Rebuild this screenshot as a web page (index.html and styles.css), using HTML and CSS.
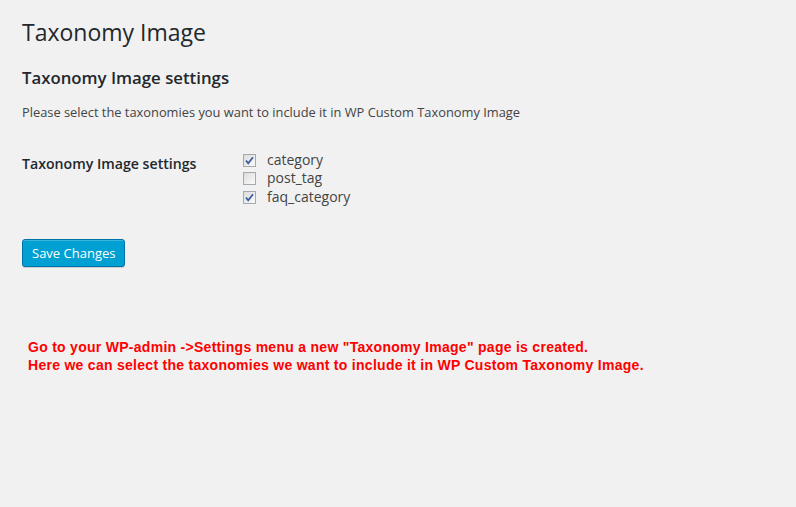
FILE: index.html
```html
<!DOCTYPE html>
<html>
<head>
<meta charset="utf-8">
<link rel="stylesheet" href="styles.css">
</head>
<body>
<div class="wrap">
  <h1 class="title">Taxonomy Image</h1>
  <h3 class="subtitle">Taxonomy Image settings</h3>
  <p class="desc">Please select the taxonomies you want to include it in WP Custom Taxonomy Image</p>
  <div class="form-row">
    <div class="label">Taxonomy Image settings</div>
    <div class="options">
      <label class="opt"><span class="cb"><svg viewBox="0 0 11 11" width="11" height="11"><path d="M2 5.5 L4.2 8.2 L9 2.2" fill="none" stroke="#3b5c9e" stroke-width="1.8"/></svg></span>category</label>
      <label class="opt"><span class="cb"></span>post_tag</label>
      <label class="opt"><span class="cb"><svg viewBox="0 0 11 11" width="11" height="11"><path d="M2 5.5 L4.2 8.2 L9 2.2" fill="none" stroke="#3b5c9e" stroke-width="1.8"/></svg></span>faq_category</label>
    </div>
  </div>
  <button class="btn">Save Changes</button>
  <div class="note">
    <div>Go to your WP-admin -&gt;Settings menu a new "Taxonomy Image" page is created.</div>
    <div>Here we can select the taxonomies we want to include it in WP Custom Taxonomy Image.</div>
  </div>
</div>
</body>
</html>
```
FILE: styles.css
```css
html, body {
  margin: 0;
  padding: 0;
  background: #f1f1f1;
}
body {
  width: 796px;
  height: 507px;
  overflow: hidden;
  font-family: "Open Sans", sans-serif;
  color: #444;
}
.wrap {
  padding: 14px 0 0 22px;
}
.title {
  margin: 0;
  font-size: 23px;
  font-weight: 400;
  line-height: 36px;
  color: #23282d;
}
.subtitle {
  margin: 17px 0 0;
  font-size: 16.8px;
  font-weight: 600;
  line-height: 22px;
  color: #23282d;
}
.desc {
  margin: 14px 0 0;
  font-size: 12.85px;
  line-height: 18px;
  color: #444;
}
.form-row {
  display: flex;
  margin-top: 30px;
}
.label {
  width: 221px;
  font-size: 14.15px;
  font-weight: 600;
  color: #23282d;
  line-height: 20px;
  padding-top: 3px;
}
.options {
  display: flex;
  flex-direction: column;
}
.opt {
  display: flex;
  align-items: center;
  font-size: 14px;
  line-height: 18.4px;
  color: #444;
}
.cb {
  width: 11px;
  height: 11px;
  border: 1px solid #a4a9ae;
  background: linear-gradient(135deg, #dcdcdc, #fafafa);
  margin-right: 11px;
  display: flex;
  align-items: center;
  justify-content: center;
  box-sizing: content-box;
}
.btn {
  display: block;
  margin-top: 33px;
  height: 28px;
  padding: 0 9px;
  background: #00a0d2;
  border: 1px solid #0073aa;
  border-radius: 3px;
  box-shadow: inset 0 1px 0 rgba(120,200,230,0.5), 0 1px 0 rgba(0,0,0,0.15);
  color: #fff;
  font-family: "Open Sans", sans-serif;
  font-size: 13px;
  line-height: 26px;
}
.note {
  margin: 71px 0 0 6px;
  font-family: "Liberation Sans", Arial, sans-serif;
  font-weight: 700;
  font-size: 14px;
  letter-spacing: 0.28px;
  line-height: 18px;
  color: #ff0000;
}
```
